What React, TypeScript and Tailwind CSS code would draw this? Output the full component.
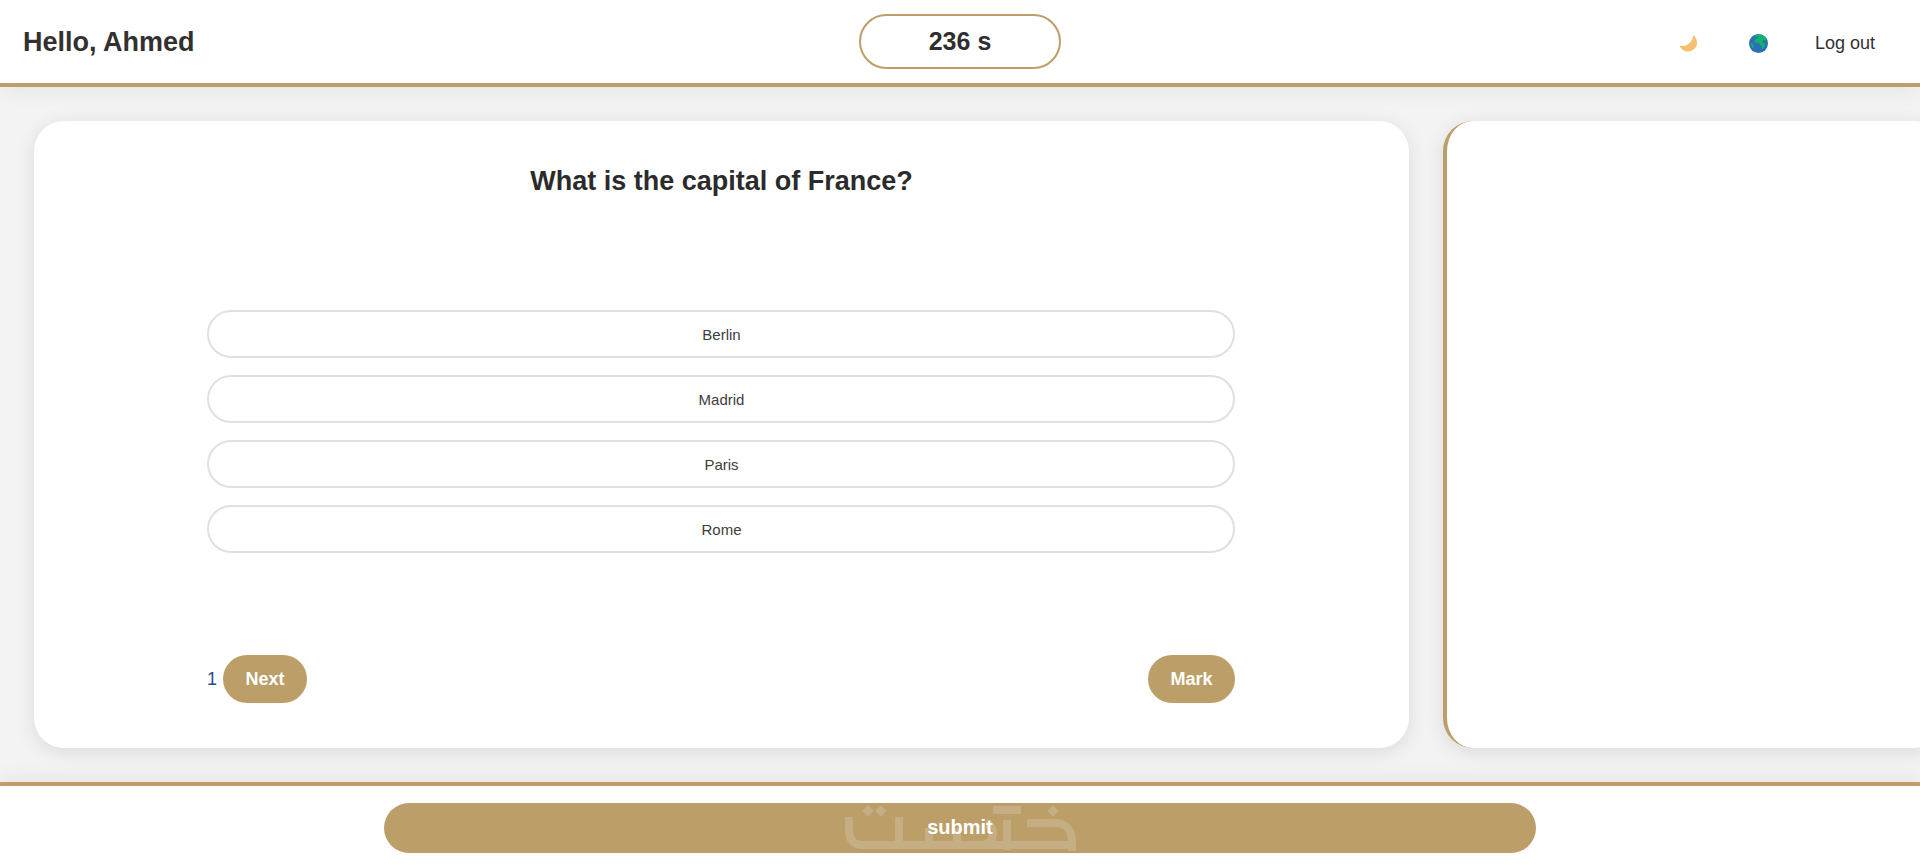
const options = ['Berlin', 'Madrid', 'Paris', 'Rome'];

function MoonIcon() {
  return (
    <svg width="18" height="18" viewBox="0 0 18 18">
      <path d="M14 1C17 3 18 6 18 9C18 14 13 17.5 8.5 17.5C5 17.5 2 15 0.5 11.5C4.5 12.5 8 11.5 10.5 9C12.5 7 14.5 4 14 1z" fill="#f4bf6f" />
    </svg>
  );
}

function GlobeIcon() {
  return (
    <svg width="19" height="19" viewBox="0 0 18 18">
      <circle cx="9" cy="9" r="9" fill="#2c6fb5" />
      <path d="M5 1.6c2-1.4 6-1.6 8.6-.2 1.6.9 2.5 2 3.2 3.4L15 6.4l-1.6-.6-1 1.4 1.4 1.6 1.8-.3-.7 3-2.2 2.6-1-.4.4-2.6-2-1.2-.6-1.6-3 .2-1.7-1.6.8-2 2.4-.6.4-1.4-2.2-.6z" fill="#0fb36b" />
      <path d="M1.6 8.4l2 1 1 2.4-.6 1.6-1.4-1.2z" fill="#0fb36b" />
    </svg>
  );
}

// faint logo behind the submit label
function Watermark() {
  return (
    <svg width="232" height="48" viewBox="0 0 232 48" fill="none" stroke="#c6ae84" strokeWidth="8" className="absolute left-[461px] top-[1px]">
      <path d="M4 13v14c0 9 5 14 14 14h209" />
      <path d="M54 13v28M84 24v17M112 24v17" />
      <path d="M135 41c8 0 13-4 13-12 0-5-2-8-7-9" />
      <path d="M148 6h28M162 16v30" />
      <path d="M182 19h28c11 0 17 7 17 18v10" />
      <rect x="19" y="3" width="8" height="8" transform="rotate(45 23 7)" fill="#c6ae84" stroke="none" />
      <rect x="32" y="3" width="8" height="8" transform="rotate(45 36 7)" fill="#c6ae84" stroke="none" />
      <rect x="204" y="3" width="8" height="8" transform="rotate(45 208 7)" fill="#c6ae84" stroke="none" />
    </svg>
  );
}

export default function App() {
  return (
    <div className="min-h-[868px] bg-[#f3f3f3] flex flex-col font-['Liberation_Sans',Arial,sans-serif]">
      <header className="h-[87px] bg-white border-b-4 border-[#bc9e68] flex items-center pl-[23px] relative z-10 shadow-[0_4px_20px_rgba(0,0,0,0.06)]">
        <h1 className="text-[27px] pt-[2px] font-bold text-[#333030] flex-1">Hello, Ahmed</h1>
        <div className="absolute left-[859px] top-[14px] w-[202px] h-[55px] border-2 border-[#bc9e68] rounded-full flex items-center justify-center text-[25px] font-bold text-[#2e2e2e]">
          236 s
        </div>
        <div className="flex items-center">
          <div className="pt-[3px]"><MoonIcon /></div>
          <div className="ml-[52px] pt-[3px]"><GlobeIcon /></div>
          <span className="ml-[47px] mr-[45px] pt-[2px] text-lg text-[#333030]">Log out</span>
        </div>
      </header>

      <main className="h-[695px] flex gap-[34px] pl-[34px] pt-[34px] overflow-hidden">
        <section className="w-[1375px] h-[627px] bg-white rounded-[30px] shadow-[0_4px_20px_rgba(0,0,0,0.1)] flex flex-col items-center shrink-0">
          <h2 className="mt-[42px] text-[27px] leading-[36px] font-bold text-[#2b2b2b]">What is the capital of France?</h2>
          <div className="w-[1028px] mr-[1px] mt-[111px] flex flex-col gap-[17px]">
            {options.map((opt) => (
              <button key={opt} className="h-[48px] pt-[2px] pl-[1px] border-2 border-[#e0e0e0] rounded-full bg-white text-[15px] text-[#3d3d3d]">
                {opt}
              </button>
            ))}
          </div>
          <div className="w-[1028px] mr-[1px] mt-[102px] flex items-center">
            <span className="text-lg text-[#1f4e8c] mr-[6px]">1</span>
            <button className="w-[84px] h-[48px] rounded-full bg-[#bc9e68] text-white text-lg font-bold">Next</button>
            <button className="ml-auto w-[87px] h-[48px] rounded-full bg-[#bc9e68] text-white text-lg font-bold">Mark</button>
          </div>
        </section>
        <aside className="w-[500px] h-[627px] bg-white rounded-[30px] border-l-4 border-[#bc9e68] shadow-[0_4px_20px_rgba(0,0,0,0.1)] shrink-0" />
      </main>

      <footer className="h-[86px] bg-white border-t-4 border-[#bc9e68] flex justify-center pt-[17px] relative z-10 shadow-[0_-4px_20px_rgba(0,0,0,0.06)]">
        <button className="w-[1152px] h-[50px] pb-[2px] rounded-full bg-[#bc9e68] text-white text-xl font-bold relative">
          <Watermark />
          <span className="relative">submit</span>
        </button>
      </footer>
    </div>
  );
}
